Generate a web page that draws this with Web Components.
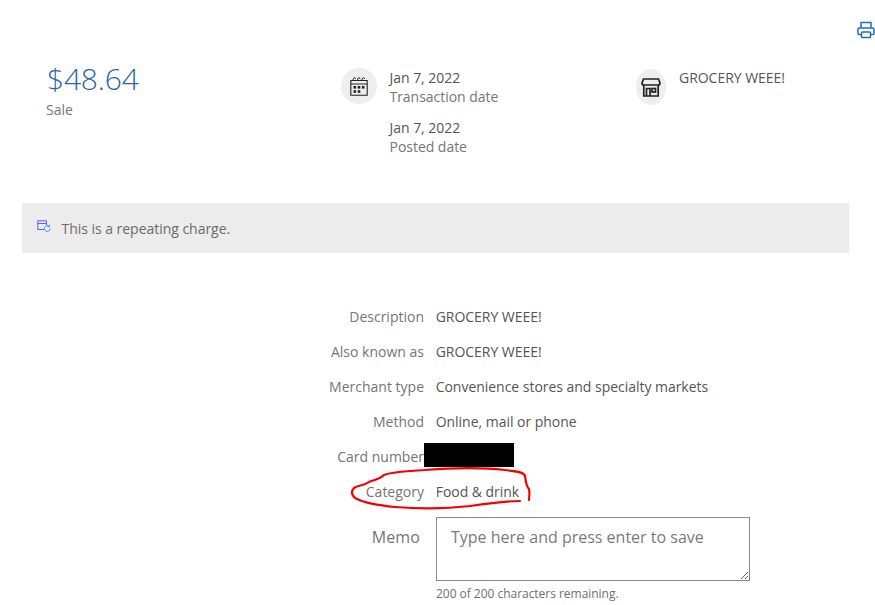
<!DOCTYPE html>
<html>
<head>
<meta charset="utf-8">
<style>
  html, body { margin: 0; padding: 0; background: #fff; overflow: hidden; height: 605px; }
  body { font-family: "Open Sans", sans-serif; color: #555; letter-spacing: -0.03px; }
</style>
</head>
<body>
<txn-page></txn-page>
<script>
const ICONS = {
  calendar: `<svg width="18" height="20" viewBox="0 0 18 20" fill="none" stroke="#222" stroke-width="1.1"><path d="M.8 4.500h16.400v14.700H.8zM.8 8h16.400"/><path d="M3 4.500c0-3.500 2.500-3.500 2.500-1.500M7.500 4.500c0-3.500 2.500-3.500 2.500-1.500M12 4.500c0-3.500 2.500-3.500 2.500-1.500" stroke-width="1"/><g fill="#222" stroke="none"><rect x="3.500" y="10" width="2.600" height="2.600"/><rect x="7.700" y="10" width="2.600" height="2.600"/><rect x="11.900" y="10" width="2.600" height="2.600"/><rect x="3.500" y="14.200" width="2.600" height="2.600"/><rect x="7.700" y="14.200" width="2.600" height="2.600"/></g></svg>`,
  store: `<svg width="20" height="19" viewBox="0 0 20 19" fill="none" stroke="#222" stroke-width="1.700"><path d="M2.500 1h15l1.500 4c0 1.400-1 2-2 2H3C2 7 1 6.400 1 5z"/><path d="M2.800 7v11h14.400V7"/><path d="M5.500 18v-7.500h3.500V18"/><rect x="11" y="10.500" width="3.500" height="3.500"/></svg>`,
  printer: `<svg width="18" height="18" viewBox="0 0 18 18" fill="none" stroke="#1f6fc0" stroke-width="1.5"><path d="M4 7V1.500h10V7"/><path d="M4 13.500H2.200A1.200 1.200 0 0 1 1 12.300V8.200A1.200 1.200 0 0 1 2.200 7h13.600A1.200 1.200 0 0 1 17 8.200v4.100a1.200 1.200 0 0 1-1.200 1.200H14"/><rect x="4.500" y="11" width="9" height="5.500" rx=".8"/></svg>`,
  repeat: `<svg width="14" height="13" viewBox="0 0 14 13" fill="none" stroke="#5a5cff" stroke-width="1"><path d="M7 9.500H.8V.8h8.700V5M.8 3.500h8.700"/><path d="M13 8.500a2.800 2.800 0 1 1-1-2.100M12.500 4.800v1.800h-1.800" stroke="#3f8fe8"/></svg>`
};

customElements.define('print-bar', class PrintBar extends HTMLElement {
  constructor() {
    super();
    this.attachShadow({mode: 'open'});
    this.shadowRoot.innerHTML = `<style>
      :host { display: flex; justify-content: flex-end; padding: 21px 0 0 0; height: 18px; }
      .btn { display: block; line-height: 0; }
    </style>
    <span class="btn">${ICONS.printer}</span>`;
  }
});

customElements.define('icon-badge', class IconBadge extends HTMLElement {
  constructor() {
    super();
    this.attachShadow({mode: 'open'});
    this.shadowRoot.innerHTML = `<style>
      :host { display: flex; align-items: center; justify-content: center; flex: none; width: 36px; height: 36px; border-radius: 50%; background: #eeeeee; }
      :host([narrow]) { width: 30px; height: 36px; }
      span { display: block; line-height: 0; }
    </style>
    <span>${ICONS[this.getAttribute('icon')]}</span>`;
  }
});

customElements.define('date-item', class DateItem extends HTMLElement {
  constructor() {
    super();
    this.attachShadow({mode: 'open'});
    this.shadowRoot.innerHTML = `<style>
      :host { display: block; font-size: 14px; line-height: 19px; }
      .l { color: #757575; }
    </style>
    <div>${this.getAttribute('value')}</div>
    <div class="l">${this.getAttribute('label')}</div>`;
  }
});

customElements.define('txn-summary', class TxnSummary extends HTMLElement {
  constructor() {
    super();
    this.attachShadow({mode: 'open'});
    this.shadowRoot.innerHTML = `<style>
      :host { display: grid; grid-template-columns: 295px 295px 1fr; padding: 21px 0 0 46px; height: 143px; }
      .amount { font-size: 30px; line-height: 38px; color: #2b66a8; font-weight: 300; margin-left: 1px; letter-spacing: -0.2px; }
      .sale { font-size: 14px; line-height: 19px; color: #757575; margin-top: 2px; }
      .col { display: flex; gap: 12.5px; }
      .dates { display: flex; flex-direction: column; gap: 12px; padding-top: 8px; }
      .store { display: flex; gap: 13px; }
      .name { font-size: 14px; line-height: 19px; padding-top: 8px; }
      icon-badge { margin-top: 8px; }
      .store icon-badge { margin-top: 9px; }
    </style>
    <div>
      <div class="amount">$48.64</div>
      <div class="sale">Sale</div>
    </div>
    <div class="col">
      <icon-badge icon="calendar"></icon-badge>
      <div class="dates">
        <date-item value="Jan 7, 2022" label="Transaction date"></date-item>
        <date-item value="Jan 7, 2022" label="Posted date"></date-item>
      </div>
    </div>
    <div class="store">
      <icon-badge icon="store" narrow></icon-badge>
      <div class="name">GROCERY WEEE!</div>
    </div>`;
  }
});

customElements.define('repeat-banner', class RepeatBanner extends HTMLElement {
  constructor() {
    super();
    this.attachShadow({mode: 'open'});
    this.shadowRoot.innerHTML = `<style>
      :host { display: flex; align-items: center; margin: 0 26px 0 22px; height: 50px; background: #ececec; padding-left: 15px; gap: 10.5px; font-size: 14px; color: #6b6b6b; }
      .i { line-height: 0; margin-top: -4px; }
    </style>
    <span class="i">${ICONS.repeat}</span><slot></slot>`;
  }
});

customElements.define('detail-row', class DetailRow extends HTMLElement {
  constructor() {
    super();
    this.attachShadow({mode: 'open'});
    this.shadowRoot.innerHTML = `<style>
      :host { display: grid; grid-template-columns: 424px 1fr; column-gap: 11.7px; height: 35px; align-items: center; font-size: 14px; }
      .k { text-align: right; color: #757575; letter-spacing: 0; }
    </style>
    <div class="k">${this.getAttribute('label')}</div>
    <div class="v"><slot></slot></div>`;
  }
});

customElements.define('card-row', class CardRow extends HTMLElement {
  constructor() {
    super();
    this.attachShadow({mode: 'open'});
    this.shadowRoot.innerHTML = `<style>
      :host { display: grid; grid-template-columns: 424px 90px; height: 35px; align-items: center; font-size: 14px; }
      .k { text-align: right; color: #757575; letter-spacing: 0; }
      .mask { background: #000; height: 24px; margin-bottom: 4px; }
    </style>
    <div class="k">Card number</div>
    <div class="mask"></div>`;
  }
});

customElements.define('memo-field', class MemoField extends HTMLElement {
  constructor() {
    super();
    this.attachShadow({mode: 'open'});
    this.shadowRoot.innerHTML = `<style>
      :host { display: grid; grid-template-columns: 420px 314px; column-gap: 16px; margin-top: 8px; font-family: "Open Sans", sans-serif; }
      label { text-align: right; font-size: 16px; line-height: 22px; color: #757575; padding-top: 9px; letter-spacing: 0.1px; }
      textarea { display: block; box-sizing: border-box; width: 314px; height: 64px; margin: 0; padding: 8px 14px; border: 1px solid #8a8a8a; border-radius: 0; outline: 0; font: 16px/22px "Open Sans", sans-serif; color: #555; background: #fff; }
      textarea::placeholder { color: #7a7a7a; opacity: 1; }
      .hint { font-size: 12px; line-height: 16px; color: #6f6f6f; margin-top: 5px; }
    </style>
    <label>Memo</label>
    <div>
      <textarea placeholder="Type here and press enter to save"></textarea>
      <div class="hint">200 of 200 characters remaining.</div>
    </div>`;
  }
});

customElements.define('red-scribble', class RedScribble extends HTMLElement {
  constructor() {
    super();
    this.attachShadow({mode: 'open'});
    this.shadowRoot.innerHTML = `<style>
      :host { position: absolute; left: 345px; top: 462px; width: 195px; height: 52px; pointer-events: none; }
      svg { display: block; }
    </style>
    <svg width="195" height="52" viewBox="345 462 195 52" fill="none" stroke="#f40000" stroke-width="2.200" stroke-linecap="round" stroke-linejoin="round">
      <path d="M520 501C505 501 490 503 470 506C445 509 420 509 395 507C375 505 365 503 357 499C351 496 351 491 354 488C358 485 364 486 369 482C374 480 380 479 384 475C392 472 405 471 425 470C450 468 480 467 505 470C516 471 524 472 525 476C526 482 526 486 529 489C530 493 529 497 529 500"/>
    </svg>`;
  }
});

customElements.define('txn-page', class TxnPage extends HTMLElement {
  constructor() {
    super();
    this.attachShadow({mode: 'open'});
    this.shadowRoot.innerHTML = `<style>
      :host { display: block; position: relative; width: 875px; height: 605px; overflow: hidden; }
      .details { margin-top: 46px; }
    </style>
    <print-bar></print-bar>
    <txn-summary></txn-summary>
    <repeat-banner>This is a repeating charge.</repeat-banner>
    <div class="details">
      <detail-row label="Description">GROCERY WEEE!</detail-row>
      <detail-row label="Also known as">GROCERY WEEE!</detail-row>
      <detail-row label="Merchant type">Convenience stores and specialty markets</detail-row>
      <detail-row label="Method">Online, mail or phone</detail-row>
      <card-row></card-row>
      <detail-row label="Category">Food &amp; drink</detail-row>
      <memo-field></memo-field>
    </div>
    <red-scribble></red-scribble>`;
  }
});
</script>
</body>
</html>
